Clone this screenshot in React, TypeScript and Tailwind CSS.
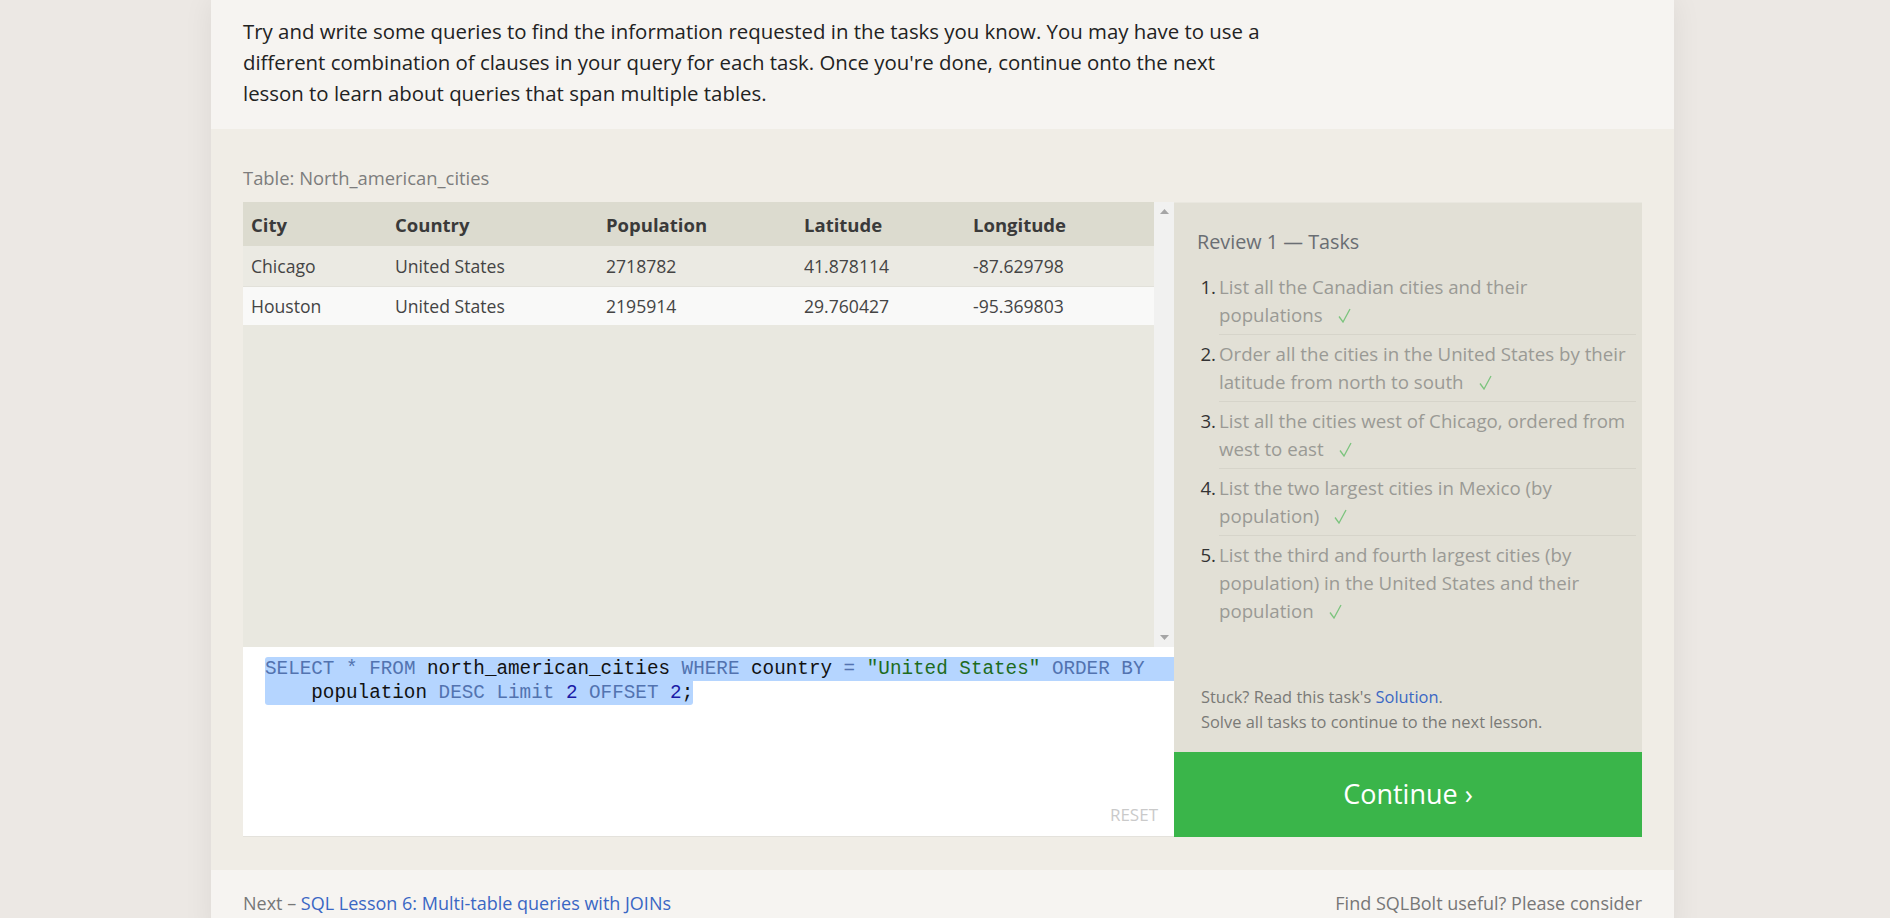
import React from 'react';

interface City {
  city: string;
  country: string;
  population: string;
  latitude: string;
  longitude: string;
}

const rows: City[] = [
  { city: 'Chicago', country: 'United States', population: '2718782', latitude: '41.878114', longitude: '-87.629798' },
  { city: 'Houston', country: 'United States', population: '2195914', latitude: '29.760427', longitude: '-95.369803' },
];

const tasks: string[] = [
  'List all the Canadian cities and their populations',
  'Order all the cities in the United States by their latitude from north to south',
  'List all the cities west of Chicago, ordered from west to east',
  'List the two largest cities in Mexico (by population)',
  'List the third and fourth largest cities (by population) in the United States and their population',
];

const cols = ['w-[144px]', 'w-[211px]', 'w-[198px]', 'w-[169px]', 'w-[188px]'];

const Check: React.FC = () => (
  <svg className="inline-block ml-[15px] align-[-1px]" width="13" height="15" viewBox="0 0 13 15">
    <polyline points="1,8.5 5,14 12,1" fill="none" stroke="#7cc47e" strokeWidth="1.3" />
  </svg>
);

const Kw: React.FC<{ children: React.ReactNode }> = ({ children }) => (
  <span className="text-[#5273b0]">{children}</span>
);

// keep the last word glued to the check mark so it never wraps alone
const TaskText: React.FC<{ text: string }> = ({ text }) => {
  const cut = text.lastIndexOf(' ');
  return (
    <>
      {text.slice(0, cut + 1)}
      <span className="whitespace-nowrap">
        {text.slice(cut + 1)}
        <Check />
      </span>
    </>
  );
};

const App: React.FC = () => {
  return (
    <div className="min-h-screen bg-[#ece8e4] font-['Open_Sans',sans-serif]">
      <div className="ml-[211px] w-[1463px] shadow-[0_0_28px_rgba(0,0,0,0.07)]">
        {/* intro text */}
        <div className="bg-[#f6f4f1] px-8 pt-[16px] pb-[20px]">
          <p className="w-[1030px] text-[20.4px] leading-[31px] text-[#222]">
            Try and write some queries to find the information requested in the tasks you know. You may have to use a
            different combination of clauses in your query for each task. Once you're done, continue onto the next
            lesson to learn about queries that span multiple tables.
          </p>
        </div>

        {/* exercise */}
        <div className="bg-[#f0ede6] px-8 pt-[36px] pb-[33px]">
          <div className="text-[18.4px] leading-[26px] text-[#7d7d7d] mb-[11px]">Table: North_american_cities</div>
          <div className="flex">
            <div className="w-[931px] flex flex-col">
              <div className="h-[445px] flex bg-[#e9e8e0]">
                <div className="w-[911px]">
                  <div className="flex h-[44px] items-center pt-[2px] bg-[#dcdbcf] text-[18.5px] font-bold text-[#3a3a3a]">
                    {['City', 'Country', 'Population', 'Latitude', 'Longitude'].map((h, i) => (
                      <div key={h} className={`${cols[i]} pl-2`}>{h}</div>
                    ))}
                  </div>
                  {rows.map((r, idx) => (
                    <div
                      key={r.city}
                      className={`flex items-center text-[17.6px] text-[#444] ${idx === 0 ? 'h-[40px] bg-[#ebeae3]' : 'h-[39px] bg-[#f9f9f8] border-t border-[#e2e1da]'}`}
                    >
                      <div className={`${cols[0]} pl-2`}>{r.city}</div>
                      <div className={`${cols[1]} pl-2`}>{r.country}</div>
                      <div className={`${cols[2]} pl-2`}>{r.population}</div>
                      <div className={`${cols[3]} pl-2`}>{r.latitude}</div>
                      <div className={`${cols[4]} pl-2`}>{r.longitude}</div>
                    </div>
                  ))}
                </div>
                <div className="w-[20px] bg-[#f1f1f0] flex flex-col items-center justify-between py-[7px]">
                  <svg width="9" height="5" viewBox="0 0 9 5"><polygon points="0,5 4.5,0 9,5" fill="#a5a5a5" /></svg>
                  <svg width="9" height="5" viewBox="0 0 9 5"><polygon points="0,0 9,0 4.5,5" fill="#a5a5a5" /></svg>
                </div>
              </div>

              {/* editor */}
              <div className="relative h-[190px] bg-white border-b border-[#e4e2dc] pt-[10px] pl-[22px] font-['Liberation_Mono',monospace] text-[19.3px] leading-[24px] text-[#111]">
                <div className="bg-[#b5d5ff] rounded-tl-[3px] whitespace-pre">
                  <Kw>SELECT</Kw> <Kw>*</Kw> <Kw>FROM</Kw> north_american_cities <Kw>WHERE</Kw> country <Kw>=</Kw>{' '}
                  <span className="text-[#1d6b1d]">"United States"</span> <Kw>ORDER</Kw> <Kw>BY</Kw>
                </div>
                <div className="inline-block bg-[#b5d5ff] rounded-b-[3px] whitespace-pre">
                  {'    '}population <Kw>DESC</Kw> <Kw>Limit</Kw> <span className="text-[#1a1aa6]">2</span> <Kw>OFFSET</Kw>{' '}
                  <span className="text-[#1a1aa6]">2</span>;
                </div>
                <div className="absolute right-[16px] bottom-[10px] font-['Open_Sans',sans-serif] text-[17px] leading-[22px] text-[#cacaca]">
                  RESET
                </div>
              </div>
            </div>

            {/* tasks */}
            <div className="flex-1 flex flex-col bg-[#e2e0d6] border-t border-[#e9e7df]">
              <div className="pl-[23px] pr-[6px] pt-[25px]">
                <div className="text-[19.8px] leading-[28px] text-[#6a6e73]">Review 1 — Tasks</div>
                <ol className="mt-[12px]">
                  {tasks.map((t, i) => (
                    <li key={i} className="flex">
                      <span className="w-[22px] shrink-0 pt-[5px] text-[18.7px] leading-[28px] text-[#333] text-right pr-[3px]">
                        {i + 1}.
                      </span>
                      <span
                        className={`flex-1 pt-[5px] pb-[5px] text-[18.7px] leading-[28px] text-[#9a9a95] ${i < tasks.length - 1 ? 'border-b border-[#d6d4ca]' : ''}`}
                      >
                        <TaskText text={t} />
                      </span>
                    </li>
                  ))}
                </ol>
              </div>
              <div className="mt-auto pl-[27px] pb-[18px] text-[16.4px] leading-[25px] text-[#7a7a76]">
                <div>
                  Stuck? Read this task's <span className="text-[#3a67c4]">Solution</span>.
                </div>
                <div>Solve all tasks to continue to the next lesson.</div>
              </div>
              <div className="h-[85px] bg-[#3ab54a] flex items-center justify-center text-white text-[27px]">
                Continue ›
              </div>
            </div>
          </div>
        </div>

        {/* footer */}
        <div className="bg-[#f6f4f1] px-8 pt-[20px] pb-[20px] flex justify-between text-[18px] leading-[26px] text-[#777]">
          <div>
            Next – <span className="text-[#3a67c4]">SQL Lesson 6: Multi-table queries with JOINs</span>
          </div>
          <div>Find SQLBolt useful? Please consider</div>
        </div>
      </div>
    </div>
  );
};

export default App;
